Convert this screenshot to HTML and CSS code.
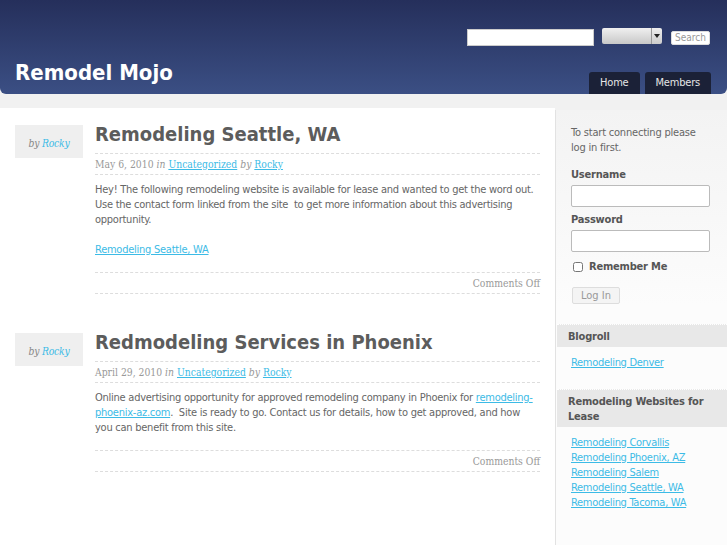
FILE: index.html
```html
<!DOCTYPE html>
<html lang="en">
<head>
    <meta charset="UTF-8">
    <meta name="viewport" content="width=device-width, initial-scale=1.0">
    <title>Remodel Mojo</title>
    <link rel="stylesheet" href="styles.css">
</head>
<body>
    <div id="header">
        <form class="searchform">
            <input type="text" class="searchbox">
            <div class="scope"><span class="scope-value"></span><span class="scope-arrow"></span></div>
            <button type="button" class="searchbtn">Search</button>
        </form>
        <div class="brand">
            <h1 class="sitename">Remodel Mojo</h1>
            <ul class="tabs">
                <li><a href="#">Home</a></li>
                <li><a href="#">Members</a></li>
            </ul>
        </div>
    </div>

    <div id="container">
        <div id="content">
            <div class="post">
                <div class="author">by <a href="#">Rocky</a></div>
                <div class="entry">
                    <h2 class="title">Remodeling Seattle, WA</h2>
                    <div class="meta">May 6, 2010 <em>in</em> <a href="#">Uncategorized</a> <em>by</em> <a href="#">Rocky</a></div>
                    <div class="body">
                        <p>Hey! The following remodeling website is available for lease and wanted to get the word out. Use the contact form linked from the site&nbsp; to get more information about this advertising opportunity.</p>
                        <p><a href="#">Remodeling Seattle, WA</a></p>
                    </div>
                    <div class="comments">Comments Off</div>
                </div>
            </div>
            <div class="post">
                <div class="author">by <a href="#">Rocky</a></div>
                <div class="entry">
                    <h2 class="title">Redmodeling Services in Phoenix</h2>
                    <div class="meta">April 29, 2010 <em>in</em> <a href="#">Uncategorized</a> <em>by</em> <a href="#">Rocky</a></div>
                    <div class="body">
                        <p>Online advertising opportunity for approved remodeling company in Phoenix for <a href="#">remodeling-phoenix-az.com</a>.&nbsp; Site is ready to go. Contact us for details, how to get approved, and how you can benefit from this site.</p>
                    </div>
                    <div class="comments">Comments Off</div>
                </div>
            </div>
        </div>

        <div id="sidebar">
            <div class="login">
                <p>To start connecting please log in first.</p>
                <label class="field-label">Username</label>
                <input type="text" class="field">
                <label class="field-label pw">Password</label>
                <input type="password" class="field">
                <label class="remember"><input type="checkbox"> Remember Me</label>
                <button type="button" class="loginbtn">Log In</button>
            </div>
            <h3 class="widget-title">Blogroll</h3>
            <ul class="links">
                <li><a href="#">Remodeling Denver</a></li>
            </ul>
            <h3 class="widget-title">Remodeling Websites for Lease</h3>
            <ul class="links">
                <li><a href="#">Remodeling Corvallis</a></li>
                <li><a href="#">Remodeling Phoenix, AZ</a></li>
                <li><a href="#">Remodeling Salem</a></li>
                <li><a href="#">Remodeling Seattle, WA</a></li>
                <li><a href="#">Remodeling Tacoma, WA</a></li>
            </ul>
        </div>
    </div>
</body>
</html>
```

FILE: styles.css
```css
body{
    margin: 0;
    background: #f1f1f1;
    font-family: "DejaVu Sans Condensed", "DejaVu Sans", sans-serif;
    font-size: 11px;
    letter-spacing: -0.2px;
    color: #666;
}
a{
    color: #3cbbe6;
}

#header{
    height: 94px;
    background: linear-gradient(#252f5b, #3b4f84);
    border-radius: 0 0 6px 6px;
    display: flex;
    flex-direction: column;
    justify-content: space-between;
}
.searchform{
    display: flex;
    justify-content: flex-end;
    align-items: flex-start;
    padding: 28px 17px 0 0;
}
.searchbox{
    width: 125px;
    height: 15px;
    margin: 1px 8px 0 0;
    padding: 0;
    border: 1px solid #ccc;
}
.scope{
    display: flex;
    width: 60px;
    height: 16px;
    margin-right: 9px;
    border-radius: 2px;
    overflow: hidden;
}
.scope-value{
    flex: 1;
    background: linear-gradient(#f0f0f0, #c8c8c8);
}
.scope-arrow{
    width: 10px;
    border-left: 1px solid #999;
    background: linear-gradient(#eee, #ccc);
    position: relative;
}
.scope-arrow::after{
    content: "";
    position: absolute;
    left: 2px;
    top: 6px;
    border: 3px solid transparent;
    border-top: 4px solid #222;
}
.searchbtn{
    margin-top: 3px;
    height: 14px;
    padding: 0 3px;
    background: #fff;
    border: 1px solid #ddd;
    border-radius: 2px;
    color: #999;
    font-family: "DejaVu Sans Condensed", "DejaVu Sans", sans-serif;
    font-size: 10px;
    line-height: 12px;
}
.brand{
    display: flex;
    justify-content: space-between;
    align-items: flex-end;
}
.sitename{
    margin: 0 0 9px 15px;
    color: #fff;
    font-size: 22px;
    line-height: 24px;
    letter-spacing: 0;
}
.tabs{
    list-style: none;
    display: flex;
    gap: 5px;
    margin: 0 16px 0 0;
    padding: 0;
}
.tabs a{
    display: block;
    height: 22px;
    padding: 0 11px;
    background: #1b2137;
    border-radius: 3px 3px 0 0;
    color: #e6e6e6;
    line-height: 22px;
    text-decoration: none;
}

#container{
    display: flex;
    margin-top: 14px;
}
#content{
    width: 555px;
    min-height: 437px;
    background: #fff;
}
#sidebar{
    flex: 1;
    margin-top: 2px;
    border-left: 1px solid #e2e2e2;
    background: linear-gradient(#f3f3f3, #fcfcfc 45%);
}

.post{
    display: flex;
    padding-top: 15px;
    margin-bottom: 22px;
}
.author{
    width: 68px;
    height: 33px;
    margin: 2px 12px 0 15px;
    background: #efefef;
    font-family: "DejaVu Serif Condensed", "DejaVu Serif", serif;
    font-style: italic;
    font-size: 10.3px;
    line-height: 36px;
    text-align: center;
    color: #888;
}
.author a{
    text-decoration: none;
}
.entry{
    width: 445px;
}
.title{
    margin: 0;
    padding-bottom: 8px;
    border-bottom: 1px dashed #ddd;
    color: #5c5c5c;
    font-size: 20px;
    line-height: 22px;
    letter-spacing: 0;
}
.meta{
    line-height: 20px;
    border-bottom: 1px dashed #ddd;
    font-family: "DejaVu Serif Condensed", "DejaVu Serif", serif;
    font-size: 10.3px;
    letter-spacing: 0;
    color: #999;
}
.body{
    padding-top: 7px;
    line-height: 15px;
    letter-spacing: -0.25px;
}
.body p{
    margin: 0 0 15px;
}
.comments{
    line-height: 20px;
    border-top: 1px dashed #ddd;
    border-bottom: 1px dashed #ddd;
    text-align: right;
    font-family: "DejaVu Serif Condensed", "DejaVu Serif", serif;
    font-size: 10.3px;
    letter-spacing: 0;
    color: #999;
}

.login{
    display: flex;
    flex-direction: column;
    align-items: flex-start;
    padding: 15px 16px 0 15px;
    line-height: 15px;
}
.login p{
    margin: 0;
}
.field-label{
    margin-top: 12px;
    font-weight: bold;
    color: #555;
}
.field-label.pw{
    margin-top: 5px;
}
.field{
    box-sizing: border-box;
    width: 139px;
    height: 22px;
    margin-top: 3px;
    border: 1px solid #bbb;
    border-radius: 2px;
}
.remember{
    display: flex;
    align-items: center;
    margin-top: 7px;
    font-weight: bold;
    color: #555;
}
.remember input{
    width: 10px;
    height: 10px;
    margin: 0 6px 0 2px;
}
.loginbtn{
    margin: 13px 0 0 1px;
    height: 17px;
    padding: 0 8px;
    background: #f4f4f4;
    border: 1px solid #ddd;
    border-radius: 2px;
    color: #999;
    font-family: "DejaVu Sans Condensed", "DejaVu Sans", sans-serif;
    font-size: 11px;
}
.widget-title{
    margin: 20px 0 0 1px;
    padding: 4px 11px 3px;
    background: #e8e8e8;
    border-top: 1px dotted #fff;
    font-size: 11px;
    line-height: 15px;
    color: #555;
}
.links + .widget-title{
    margin-top: 19px;
}
.links{
    list-style: none;
    margin: 8px 0 0;
    padding: 0 0 0 15px;
    line-height: 15px;
    letter-spacing: -0.3px;
}
```
